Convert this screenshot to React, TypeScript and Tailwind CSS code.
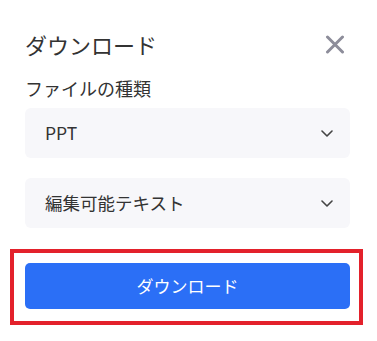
import React, { useState } from 'react';

const FONT = { fontFamily: '"Noto Sans CJK JP", "Noto Sans", sans-serif' };

const Chevron: React.FC = () => (
  <svg width="12" height="7" viewBox="0 0 12 7" fill="none" className="shrink-0">
    <path d="M1 1l5 5 5-5" stroke="#444" strokeWidth="1.6" strokeLinecap="round" strokeLinejoin="round" />
  </svg>
);

interface SelectBoxProps {
  value: string;
  className?: string;
}

const SelectBox: React.FC<SelectBoxProps> = ({ value, className = '' }) => (
  <button
    type="button"
    className={`flex h-[50px] w-full items-center justify-between rounded-[6px] bg-[#f7f7fa] pl-[20px] pr-[17px] text-left text-[17.5px] text-[#333333] ${className}`}
  >
    <span>{value}</span>
    <Chevron />
  </button>
);

const App: React.FC = () => {
  const [fileType] = useState('PPT');
  const [mode] = useState('編集可能テキスト');

  return (
    <div className="h-[341px] w-[377px] bg-white pl-[25px] pr-[27px] pt-[28px]" style={FONT}>
      <div className="flex h-[32px] items-center justify-between">
        <h2 className="text-[22px] leading-[32px] text-[#333333]">ダウンロード</h2>
        <button type="button" className="mr-[5px] flex h-[20px] w-[20px] items-center justify-center">
          <svg width="20" height="19" viewBox="0 0 20 19" fill="none">
            <path d="M2.5 2l15 15M17.5 2l-15 15" stroke="#8d8d9a" strokeWidth="3" strokeLinecap="round" />
          </svg>
        </button>
      </div>

      <p className="mt-[16px] text-[18px] leading-[24px] text-[#333333]">ファイルの種類</p>

      <SelectBox value={fileType} className="mt-[8px]" />
      <SelectBox value={mode} className="mt-[20px]" />

      <div className="-ml-[15px] -mr-[13px] mt-[21px] border-4 border-[#e3212b] pb-[12px] pl-[11px] pr-[9px] pt-[10px]">
        <button
          type="button"
          className="flex h-[46px] w-full items-center justify-center rounded-[5px] bg-[#2b6ff6] text-[17px] text-white"
        >
          ダウンロード
        </button>
      </div>
    </div>
  );
};

export default App;
